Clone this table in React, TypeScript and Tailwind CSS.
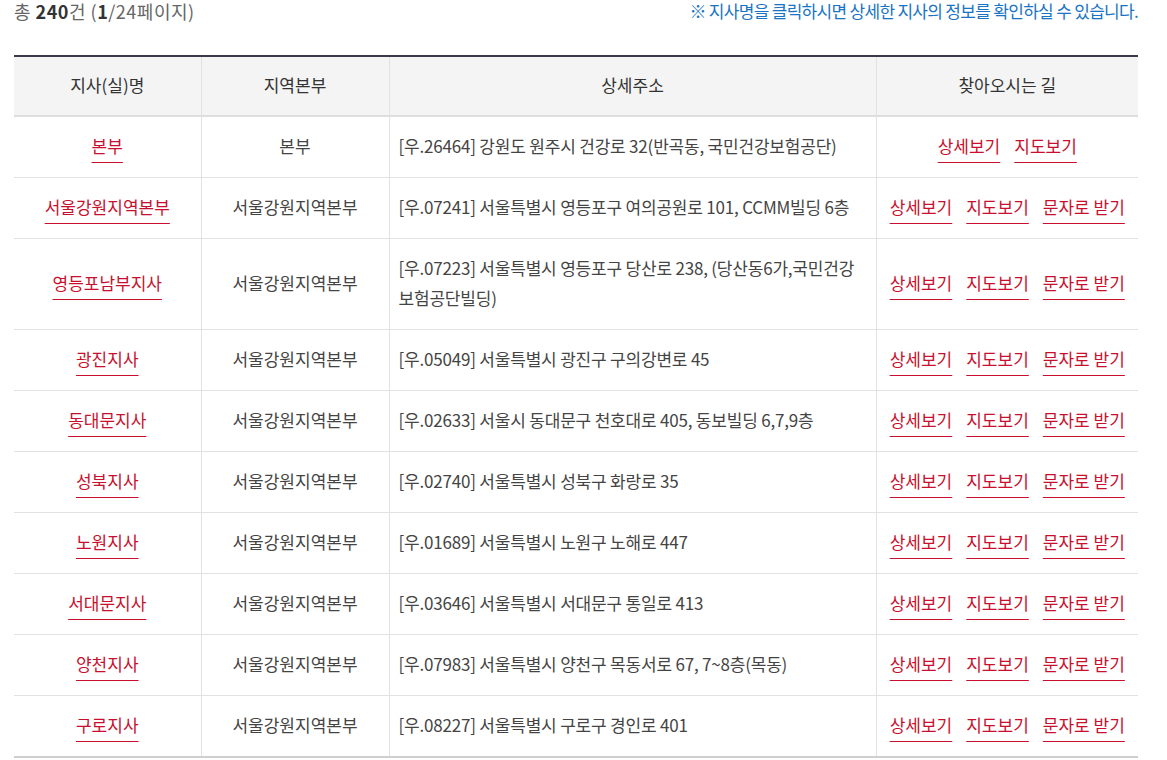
import React from "react";

interface Branch {
  name: string;
  region: string;
  address: string;
  sms: boolean;
}

const branches: Branch[] = [
  { name: "본부", region: "본부", address: "[우.26464] 강원도 원주시 건강로 32(반곡동, 국민건강보험공단)", sms: false },
  { name: "서울강원지역본부", region: "서울강원지역본부", address: "[우.07241] 서울특별시 영등포구 여의공원로 101, CCMM빌딩 6층", sms: true },
  { name: "영등포남부지사", region: "서울강원지역본부", address: "[우.07223] 서울특별시 영등포구 당산로 238, (당산동6가,국민건강보험공단빌딩)", sms: true },
  { name: "광진지사", region: "서울강원지역본부", address: "[우.05049] 서울특별시 광진구 구의강변로 45", sms: true },
  { name: "동대문지사", region: "서울강원지역본부", address: "[우.02633] 서울시 동대문구 천호대로 405, 동보빌딩 6,7,9층", sms: true },
  { name: "성북지사", region: "서울강원지역본부", address: "[우.02740] 서울특별시 성북구 화랑로 35", sms: true },
  { name: "노원지사", region: "서울강원지역본부", address: "[우.01689] 서울특별시 노원구 노해로 447", sms: true },
  { name: "서대문지사", region: "서울강원지역본부", address: "[우.03646] 서울특별시 서대문구 통일로 413", sms: true },
  { name: "양천지사", region: "서울강원지역본부", address: "[우.07983] 서울특별시 양천구 목동서로 67, 7~8층(목동)", sms: true },
  { name: "구로지사", region: "서울강원지역본부", address: "[우.08227] 서울특별시 구로구 경인로 401", sms: true },
];

function RedLink({ children }: { children: React.ReactNode }) {
  return (
    <a className="inline-block cursor-pointer text-[#c8102e] underline decoration-[#c8102e] underline-offset-[9px]">
      {children}
    </a>
  );
}

export default function App() {
  return (
    <div
      className="min-h-screen bg-white pl-[14px] pr-[29px] text-[17px] text-[#444]"
      style={{ fontFamily: '"Noto Sans CJK KR", "Noto Sans", sans-serif' }}
    >
      <div className="flex items-center justify-between leading-[22px]">
        <p className="text-[18px] tracking-[0.5px] text-[#666]">
          총 <b className="font-bold text-[#333]">240</b>건 (<b className="font-bold text-[#333]">1</b>/24페이지)
        </p>
        <p className="tracking-[-0.7px] text-[#1a74c4]">※ 지사명을 클릭하시면 상세한 지사의 정보를 확인하실 수 있습니다.</p>
      </div>

      <table className="mt-[33px] w-[1124px] table-fixed border-collapse border-t-2 border-t-[#3a3b4a] border-b-2 border-b-[#cfcfcf]">
        <colgroup>
          <col className="w-[187px]" />
          <col className="w-[188px]" />
          <col className="w-[487px]" />
          <col className="w-[262px]" />
        </colgroup>
        <thead>
          <tr className="h-[60px] border-b-2 border-[#dedede] bg-[#f4f4f4] text-[#333]">
            <th className="border-r border-[#e2e2e2] pb-[2px] font-normal">지사(실)명</th>
            <th className="border-r border-[#e2e2e2] pb-[2px] font-normal">지역본부</th>
            <th className="border-r border-[#e2e2e2] pb-[2px] font-normal">상세주소</th>
            <th className="pb-[2px] font-normal">찾아오시는 길</th>
          </tr>
        </thead>
        <tbody>
          {branches.map((b, i) => (
            <tr key={b.name} className={i === 0 ? "" : "border-t border-[#e2e2e2]"}>
              <td className="border-r border-[#e2e2e2] pt-[14px] pb-[16px] text-center leading-[30px]">
                <RedLink>{b.name}</RedLink>
              </td>
              <td className="border-r border-[#e2e2e2] pt-[14px] pb-[16px] text-center leading-[30px]">{b.region}</td>
              <td className="border-r border-[#e2e2e2] pt-[14px] pb-[16px] pl-[9px] pr-[10px] leading-[30px] tracking-[-0.2px]">
                {b.address}
              </td>
              <td className="pt-[14px] pb-[16px] text-center leading-[30px]">
                <div className="flex justify-center gap-[14px]">
                  <RedLink>상세보기</RedLink>
                  <RedLink>지도보기</RedLink>
                  {b.sms && <RedLink>문자로 받기</RedLink>}
                </div>
              </td>
            </tr>
          ))}
        </tbody>
      </table>
    </div>
  );
}
